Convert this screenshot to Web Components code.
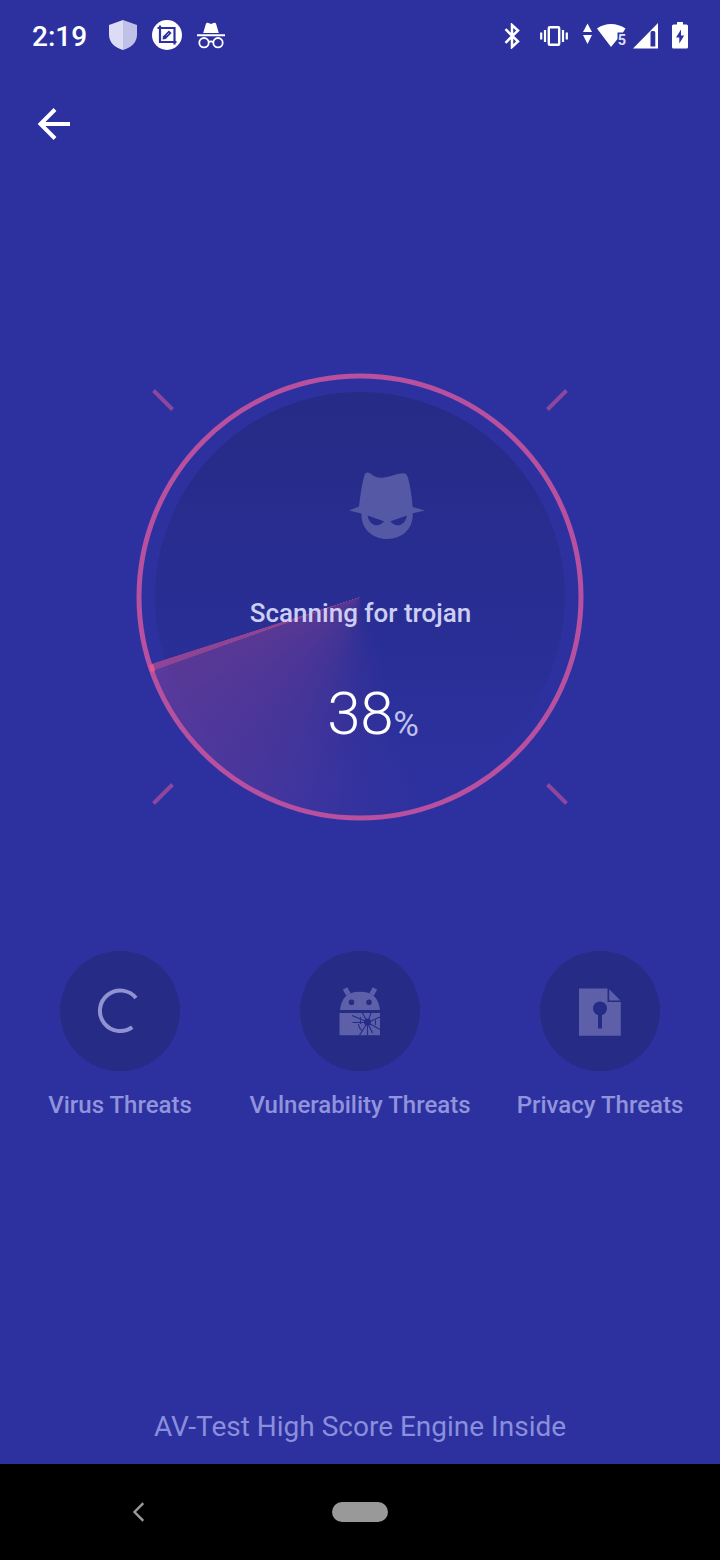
<!DOCTYPE html>
<html lang="en">
<head>
<meta charset="utf-8">
<title>Security scan</title>
<style>
html,body{margin:0;padding:0;background:#2c319f}
body{width:720px;height:1560px;overflow:hidden;font-family:Roboto,"Liberation Sans",sans-serif}
</style>
</head>
<body>
<scan-screen></scan-screen>
<script>
const define = (name, markup) => {
  const template = document.createElement('template');
  template.innerHTML = markup;
  customElements.define(name, class extends HTMLElement {
    constructor() {
      super();
      this.attachShadow({mode: 'open'}).appendChild(template.content.cloneNode(true));
    }
  });
};

const icons = {
  shield: [28, 32, `<path d="M14 1 28 6v9.500c0 8-6 13.500-14 15.500z" fill="#bfc1e6"/><path d="M14 1 0 6v9.500c0 8 6 13.500 14 15.500z" fill="#dcddf5"/>`],
  crop: [30, 30, `<circle cx="15" cy="15" r="15" fill="#fff"/><g fill="none" stroke="#2c319f" stroke-width="2.200"><path d="M5.500 8H22.500V24.500M8 5.500V22H24.500"/></g><path d="m10.500 19.500.6-3.300 5.800-5.800 2.700 2.700-5.800 5.800z" fill="#2c319f"/><path d="m14.500 15.500 2.500-2.500" stroke="#fff" stroke-width=".6"/>`],
  incognito: [28, 27, `<path d="M6.200 11 8.800 2.200Q9.300.6 10.800.8L14 2 17.200.8q1.500-.2 2 1.400l2.600 8.800zM0 12.300h28v1.900H0z" fill="#fff"/><g fill="none" stroke="#fff" stroke-width="1.800"><circle cx="7" cy="20.700" r="4.700"/><circle cx="21" cy="20.700" r="4.700"/><path d="M11.700 20.300q2.300-1.700 4.600 0"/></g>`],
  bluetooth: [18, 26, `<path d="m2.500 6.200 12.500 12.300-6 5.500V2l6 5.500L2.500 19.800" fill="none" stroke="#fff" stroke-width="2.500"/>`],
  vibrate: [28, 20, `<rect x="8.800" y="1.300" width="10.400" height="17.400" rx="1" fill="none" stroke="#fff" stroke-width="2.400"/><path d="M1.200 6.500v7M5 4v12M26.800 6.500v7M23 4v12" stroke="#fff" stroke-width="2.200"/>`],
  traffic: [10, 22, `<path d="M4.500 .5 9 9H0zM0 12h9L4.500 21z" fill="#fff"/>`],
  wifi: [30, 24, `<path d="M0 4.500C8-1.500 20-1.500 28.500 4.500L26 8.500h-5.500V15L14 23z" fill="#fff"/>`],
  signal: [25, 26, `<path d="M25 0v25.500H0zM17.500 9.500v14h4.800v-14q0-1.500-1.500-1.500h-1.800q-1.500 0-1.500 1.500" fill="#fff" fill-rule="evenodd"/>`],
  battery: [16, 27, `<path d="M5 0h6v2.500h3.500Q16 2.500 16 4v21q0 1.500-1.500 1.500h-13Q0 26.500 0 25V4q0-1.500 1.500-1.500H5z" fill="#fff"/><path d="m9 7.500-5 8h3.300v6l4.900-8H9z" fill="#2c319f"/>`],
  back: [34, 34, `<path d="M33 17H4M18 2.500 3.500 17 18 31.500" fill="none" stroke="#fff" stroke-width="4"/>`],
  chevron: [12, 20, `<path d="M11.300 1.200 2.500 10l8.800 8.800" fill="none" stroke="#999" stroke-width="2.400"/>`],
  spy: [76, 68, `<path d="M10 34.500C11.500 22 13 11 15.500 3Q17-.6 20.700 1.200C26 4.600 29 6.600 35 5.600 42 4.500 49 1.300 54 1.300 57 1.300 58.200 3 59 6 61.500 15 62.700 24 63.700 35L76 38.500l-12.300 2.800C64.500 57 53 67 38.200 67S12 57 12.500 41.500L0 38.500z" fill="#5559a5"/><path d="m18.500 43.500 16.500 5.800C32 54.500 21 56.500 18.500 43.500M58 43.500l-16.500 5.800C44.500 54.500 55.500 56.500 58 43.500" fill="#272c8d"/>`],
  spinner: [120, 120, `<path d="M76 47A20.300 20.300 0 1 0 72.200 76.200" fill="none" stroke="#9092d2" stroke-width="4"/>`],
  android: [120, 120, `<path d="M40 59C41.500 46 48 40.700 60 40.700s18.500 5.300 20 18.300zM39.500 62h40.500v22.300H39.500z" fill="#5d60a9"/><path d="m48.500 43.500-3.500-6M71.500 43.500l3.500-6" stroke="#5d60a9" stroke-width="5"/><g fill="#262b86"><circle cx="51.500" cy="51.300" r="2.800"/><circle cx="69" cy="51.300" r="2.800"/><circle cx="67.500" cy="71" r="3.500"/></g><path d="M67.500 71 52 64.500M67.500 71.500H52.500M67.500 71.500 59.500 84.300M67.500 71.500 62.500 62M67.500 71.500 71 62M67.500 71.500 80 66M67.500 71.500l12.500 7M67.500 71.500 72.500 82M67.500 71.500V84.300M60.500 66v7M58.500 73q.5 5 4 6.500M75.500 69v5" fill="none" stroke="#262b86" stroke-width="1.100"/>`],
  file: [120, 120, `<path d="M39 37.500h28.500V51H80.800v33.700H39zM69.200 38.200 80.500 49.500H69.200z" fill="#5d60a9"/><circle cx="60" cy="57.500" r="7" fill="#262b86"/><path d="M60 60v17.500" stroke="#262b86" stroke-width="4"/>`]
};

customElements.define('line-icon', class extends HTMLElement {
  connectedCallback() {
    const [w, h, body] = icons[this.getAttribute('name')];
    const root = this.shadowRoot || this.attachShadow({mode: 'open'});
    root.innerHTML = `<style>:host{display:block;flex:none;width:${w}px;height:${h}px}svg{display:block}</style><svg width="${w}" height="${h}" viewBox="0 0 ${w} ${h}">${body}</svg>`;
  }
});

define('status-bar', `
<style>
:host{display:flex;height:72px;align-items:center;box-sizing:border-box;padding:0 32px;color:#fff}
time{font:500 28px/32px Roboto,sans-serif;width:77px;margin-top:1px}
.left,.right{display:flex;align-items:center}
.left{gap:15px;margin-top:-2px}
.right{margin-left:auto;margin-top:-1px}
.wifi{display:grid;margin-left:4px}
.wifi line-icon,.wifi span{grid-area:1/1}
.wifi span{place-self:end;font:700 14.500px/13px Roboto,sans-serif;color:#dedff5;margin:0 1px 1px 0}
</style>
<time>2:19</time>
<div class="left"><line-icon name="shield"></line-icon><line-icon name="crop"></line-icon><line-icon name="incognito"></line-icon></div>
<div class="right">
<line-icon name="bluetooth"></line-icon>
<line-icon name="vibrate" style="margin-left:19px"></line-icon>
<line-icon name="traffic" style="margin:-4px 0 0 15px"></line-icon>
<div class="wifi"><line-icon name="wifi"></line-icon><span>5</span></div>
<line-icon name="signal" style="margin-left:6px"></line-icon>
<line-icon name="battery" style="margin-left:14px"></line-icon>
</div>`);

define('app-bar', `
<style>:host{display:flex;height:104px;align-items:center;padding-left:37px}</style>
<line-icon name="back"></line-icon>`);

define('scan-radar', `
<style>
:host{display:grid;width:446px;height:446px;margin:198px auto 0;grid-template:446px/446px}
:host>*{grid-area:1/1}
.disc{place-self:center;width:410px;height:410px;border-radius:50%;background:linear-gradient(#262b86 0%,#282d91 42%,#2c319f 95%)}
.beam{place-self:center;width:442px;height:442px;border-radius:50%;background:conic-gradient(rgba(196,78,146,0) 162deg,rgba(196,78,146,.05) 180deg,rgba(196,78,146,.17) 208deg,rgba(196,78,146,.3) 250.3deg,rgba(196,78,146,.66) 250.500deg,rgba(196,78,146,.66) 252.1deg,rgba(196,78,146,0) 252.3deg)}
.ring{overflow:visible}
.content{display:flex;flex-direction:column;align-items:center}
line-icon{margin:98px 0 0 54px}
.task{font:500 26px/32px Roboto,sans-serif;color:#cdcef3;margin:57px 0 0 1px;white-space:nowrap}
.progress{display:flex;align-items:baseline;margin:47px 0 0 26px;color:#fff}
.num{font:300 60px/76px Roboto,sans-serif;letter-spacing:-.3px}
.pct{font:400 35px/40px Roboto,sans-serif;color:#bfc1ef;transform:translateY(2px)}
</style>
<div class="disc"></div><div class="beam"></div>
<svg class="ring" width="446" height="446" viewBox="0 0 446 446"><circle cx="223" cy="223" r="221" fill="none" stroke="#b7509f" stroke-width="5"/><path d="M14 290.500l2 7" stroke="#e0568f" stroke-width="4.500"/><path d="m16.500 16.500 19 19M429.500 16.500l-19 19M16.500 429.500l19-19M429.500 429.500l-19-19" stroke="#8d459d" stroke-width="4"/></svg>
<div class="content"><line-icon name="spy"></line-icon><div class="task"><slot></slot></div><div class="progress"><span class="num">38</span><span class="pct">%</span></div></div>`);

customElements.define('threat-item', class extends HTMLElement {
  connectedCallback() {
    this.attachShadow({mode: 'open'}).innerHTML = `
<style>
:host{display:flex;flex-direction:column;align-items:center;width:240px}
.disc{width:120px;height:120px;border-radius:50%;background:#262b86}
.label{font:500 24px/28px Roboto,sans-serif;color:#9194dc;margin-top:20px;white-space:nowrap}
</style>
<div class="disc"><line-icon name="${this.getAttribute('icon')}"></line-icon></div><div class="label"><slot></slot></div>`;
  }
});

define('nav-bar', `
<style>
:host{display:flex;height:96px;background:#000;align-items:center;padding-left:132px}
.pill{width:56px;height:20px;border-radius:10px;background:#999;margin-left:188px}
</style>
<line-icon name="chevron"></line-icon><div class="pill"></div>`);

define('scan-screen', `
<style>
:host{display:flex;flex-direction:column;width:720px;height:1560px;background:#2c319f}
.threats{display:flex;margin-top:131px}
.footer{margin-top:auto;text-align:center;font:400 28px/34px Roboto,sans-serif;color:#8b8edc;padding-bottom:20px}
</style>
<status-bar></status-bar><app-bar></app-bar>
<scan-radar>Scanning for trojan</scan-radar>
<div class="threats"><threat-item icon="spinner">Virus Threats</threat-item><threat-item icon="android">Vulnerability Threats</threat-item><threat-item icon="file">Privacy Threats</threat-item></div>
<div class="footer">AV-Test High Score Engine Inside</div>
<nav-bar></nav-bar>`);
</script>
</body>
</html>
